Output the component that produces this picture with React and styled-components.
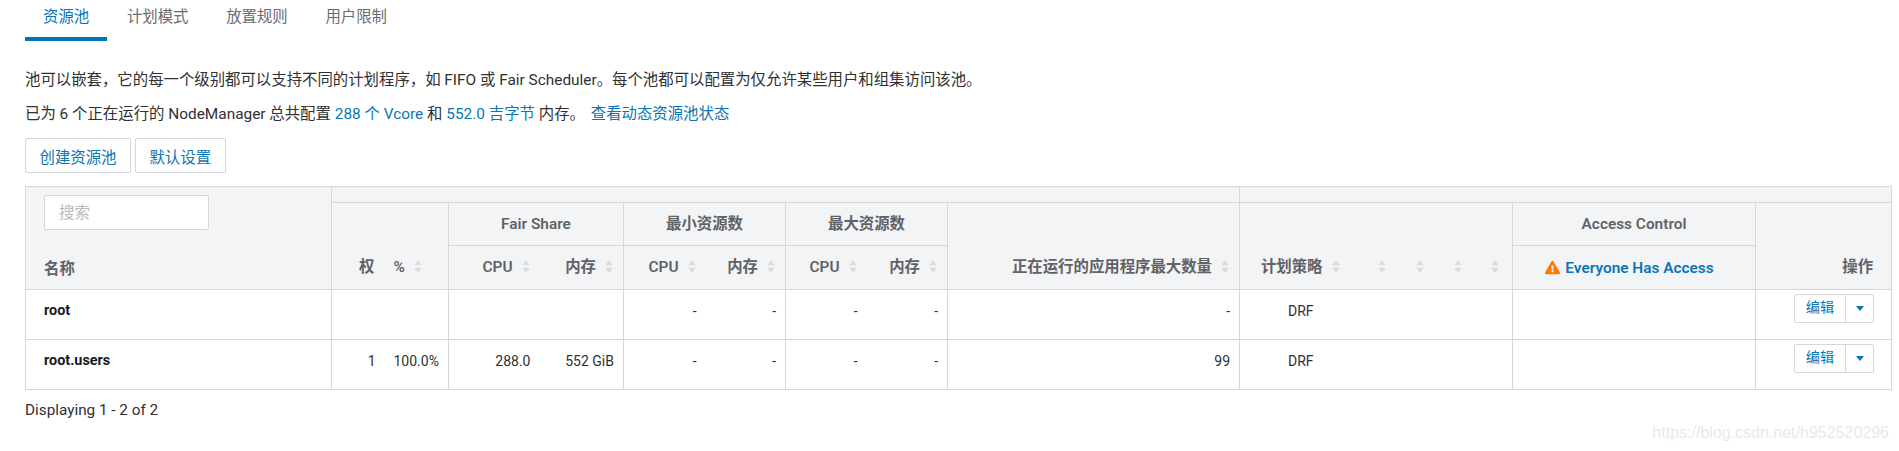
import React from 'react';
import styled, { createGlobalStyle } from 'styled-components';
import { FaExclamationTriangle } from 'react-icons/fa';

const GlobalStyle = createGlobalStyle`
  html, body {
    margin: 0;
    background: #fff;
  }
  body {
    font-family: Roboto, "Noto Sans CJK SC", sans-serif;
    font-size: 15.4px;
    color: #2f3134;
  }
`;

const LINK = '#0a77b5';
const LINE = '#d6d7da';

const columns = [306, 53, 64, 91, 84, 82, 80, 81, 81, 292, 110, 46, 38, 38, 41, 243, 136];

const rows = [
  { name: 'root', weight: '', percent: '', cpu: '', mem: '', values: '-', running: '-' },
  { name: 'root.users', weight: '1', percent: '100.0%', cpu: '288.0', mem: '552 GiB', values: '-', running: '99' },
];

const SortIcon = () => (
  <SortSvg viewBox="0 0 8 13" aria-hidden="true">
    <path d="M4 0 L7.8 5.3 H0.2 Z M4 13 L0.2 7.7 H7.8 Z" fill="#d9dbdf" />
  </SortSvg>
);

const Sortable = ({ children }) => (
  <>
    {children}
    <SortIcon />
  </>
);

const EditButton = () => (
  <SplitButton>
    <EditPart>编辑</EditPart>
    <CaretPart>
      <Caret />
    </CaretPart>
  </SplitButton>
);

export default function App() {
  return (
    <Page>
      <GlobalStyle />
      <Tabs>
        <Tab $active>资源池</Tab>
        <Tab>计划模式</Tab>
        <Tab>放置规则</Tab>
        <Tab>用户限制</Tab>
      </Tabs>

      <Intro>
        <p>池可以嵌套，它的每一个级别都可以支持不同的计划程序，如 FIFO 或 Fair Scheduler。每个池都可以配置为仅允许某些用户和组集访问该池。</p>
        <p>
          已为 6 个正在运行的 NodeManager 总共配置 <Link>288 个 Vcore</Link> 和 <Link>552.0 吉字节</Link> 内存。 <StatusLink>查看动态资源池状态</StatusLink>
        </p>
      </Intro>

      <Actions>
        <ActionButton>创建资源池</ActionButton>
        <ActionButton>默认设置</ActionButton>
      </Actions>

      <PoolTable>
        <colgroup>
          {columns.map((w, i) => (
            <col key={i} style={{ width: w }} />
          ))}
        </colgroup>
        <thead>
          <TopRow>
            <NameHead rowSpan={3}>
              <Search placeholder="搜索" />
              <NameLabel>名称</NameLabel>
            </NameHead>
            <Head colSpan={9} />
            <Head colSpan={7} />
          </TopRow>
          <GroupRow>
            <SortHead rowSpan={2} $noRule>权</SortHead>
            <PercentHead rowSpan={2}><Sortable>%</Sortable></PercentHead>
            <GroupHead colSpan={2}>Fair Share</GroupHead>
            <GroupHead colSpan={2}>最小资源数</GroupHead>
            <GroupHead colSpan={2}>最大资源数</GroupHead>
            <SortHead rowSpan={2}><Sortable>正在运行的应用程序最大数量</Sortable></SortHead>
            <SortHead rowSpan={2} $noRule><Sortable>计划策略</Sortable></SortHead>
            <SortHead rowSpan={2} $noRule><SortIcon /></SortHead>
            <SortHead rowSpan={2} $noRule><SortIcon /></SortHead>
            <SortHead rowSpan={2} $noRule><SortIcon /></SortHead>
            <LastSortHead rowSpan={2}><SortIcon /></LastSortHead>
            <GroupHead>Access Control</GroupHead>
            <ActionHead rowSpan={2}>操作</ActionHead>
          </GroupRow>
          <SubRow>
            <SortHead $noRule><Sortable>CPU</Sortable></SortHead>
            <SortHead><Sortable>内存</Sortable></SortHead>
            <SortHead $noRule><Sortable>CPU</Sortable></SortHead>
            <SortHead><Sortable>内存</Sortable></SortHead>
            <SortHead $noRule><Sortable>CPU</Sortable></SortHead>
            <SortHead><Sortable>内存</Sortable></SortHead>
            <AccessHead>
              <FaExclamationTriangle color="#ff7a00" size={15} />
              <span>Everyone Has Access</span>
            </AccessHead>
          </SubRow>
        </thead>
        <tbody>
          {rows.map((row) => (
            <BodyRow key={row.name}>
              <NameCell>{row.name}</NameCell>
              <NumCell $noRule>{row.weight}</NumCell>
              <PercentCell>{row.percent}</PercentCell>
              <NumCell $noRule>{row.cpu}</NumCell>
              <NumCell>{row.mem}</NumCell>
              <NumCell $noRule>{row.values}</NumCell>
              <NumCell>{row.values}</NumCell>
              <NumCell $noRule>{row.values}</NumCell>
              <NumCell>{row.values}</NumCell>
              <NumCell>{row.running}</NumCell>
              <PolicyCell $noRule>DRF</PolicyCell>
              <Cell $noRule />
              <Cell $noRule />
              <Cell $noRule />
              <Cell />
              <Cell />
              <ActionCell>
                <EditButton />
              </ActionCell>
            </BodyRow>
          ))}
        </tbody>
      </PoolTable>

      <Footer>Displaying 1 - 2 of 2</Footer>
      <Watermark>https://blog.csdn.net/h952520296</Watermark>
    </Page>
  );
}

const Page = styled.div`
  position: relative;
  box-sizing: border-box;
  width: 1899px;
  height: 451px;
  padding-left: 25px;
  overflow: hidden;
`;

const Tabs = styled.div`
  display: flex;
  gap: 1.7px;
`;

const Tab = styled.div`
  padding: 0 18px 4px;
  height: 33px;
  line-height: 35px;
  border-bottom: 4px solid ${(p) => (p.$active ? '#0077b5' : 'transparent')};
  color: ${(p) => (p.$active ? LINK : '#686c71')};
`;

const Intro = styled.div`
  margin-top: 29px;

  p {
    margin: 0 0 14px;
    line-height: 20px;
    white-space: nowrap;
  }
`;

const Link = styled.a`
  color: ${LINK};
`;

const StatusLink = styled(Link)`
  margin-left: 2px;
`;

const Actions = styled.div`
  display: flex;
  gap: 4px;
  margin-top: 14px;
`;

const ActionButton = styled.button`
  box-sizing: border-box;
  height: 35px;
  padding: 0 13.5px;
  background: #fff;
  border: 1px solid ${LINE};
  border-radius: 2px;
  color: ${LINK};
  font: inherit;
`;

const PoolTable = styled.table`
  table-layout: fixed;
  border-collapse: collapse;
  width: 1867px;
  margin-top: 13px;
`;

const TopRow = styled.tr`
  height: 16px;
`;

const GroupRow = styled.tr`
  height: 43px;
`;

const SubRow = styled.tr`
  height: 44px;
`;

const BodyRow = styled.tr`
  height: 50px;
`;

const Head = styled.th`
  padding: 0;
  background: #f3f4f6;
  border-top: 1px solid ${LINE};
  border-bottom: 1px solid ${LINE};
  border-right: ${(p) => (p.$noRule ? 'none' : `1px solid ${LINE}`)};
  color: #5f6368;
  font-weight: 600;
  line-height: 20px;
`;

const NameHead = styled(Head)`
  padding: 7px 18px 10px;
  border-left: 1px solid ${LINE};
  text-align: left;
  vertical-align: bottom;
`;

const Search = styled.input`
  display: block;
  box-sizing: border-box;
  width: 165px;
  height: 35px;
  margin-bottom: 29px;
  padding: 0 14px;
  background: #fff;
  border: 1px solid ${LINE};
  border-radius: 2px;
  font: inherit;
  font-weight: 400;

  &::placeholder {
    color: #b8b9bb;
  }
`;

const NameLabel = styled.div``;

const GroupHead = styled(Head)`
  text-align: center;
`;

const SortHead = styled(Head)`
  padding-right: 10px;
  text-align: right;
  vertical-align: bottom;
  line-height: 43px;
  white-space: nowrap;
`;

const PercentHead = styled(SortHead)`
  padding-left: 9px;
  text-align: left;
`;

const LastSortHead = styled(SortHead)`
  padding-right: 13px;
`;

const ActionHead = styled(SortHead)`
  padding-right: 18px;
`;

const AccessHead = styled(Head)`
  padding-right: 9px;
  color: ${LINK};
  white-space: nowrap;

  svg {
    margin-right: 5px;
    vertical-align: -2px;
  }
`;

const SortSvg = styled.svg`
  display: inline-block;
  width: 8px;
  height: 13px;
  margin-left: 9px;
  vertical-align: -1px;
`;

const Cell = styled.td`
  padding: 0;
  border-bottom: 1px solid ${LINE};
  border-right: ${(p) => (p.$noRule ? 'none' : `1px solid ${LINE}`)};
  font-size: 14px;
  line-height: 20px;
  vertical-align: top;
`;

const NameCell = styled(Cell)`
  padding: 11px 18px 0;
  border-left: 1px solid ${LINE};
  color: #17191c;
  font-weight: 700;
  font-size: 14.4px;
`;

const NumCell = styled(Cell)`
  padding: 11px 9px 0 0;
  text-align: right;
  white-space: nowrap;
`;

const PercentCell = styled(Cell)`
  padding: 11px 0 0 9px;
  white-space: nowrap;
`;

const PolicyCell = styled(Cell)`
  padding: 11px 36px 0 0;
  text-align: right;
`;

const ActionCell = styled(Cell)`
  padding: 4px 17px 0 0;
`;

const SplitButton = styled.div`
  display: flex;
  justify-content: flex-end;
`;

const EditPart = styled.button`
  box-sizing: border-box;
  width: 52px;
  height: 29px;
  padding: 0 0 4px;
  background: #fff;
  border: 1px solid ${LINE};
  border-radius: 2px 0 0 2px;
  color: ${LINK};
  font: inherit;
  font-size: 14.2px;
`;

const CaretPart = styled.button`
  display: flex;
  align-items: center;
  justify-content: center;
  box-sizing: border-box;
  width: 29px;
  height: 29px;
  margin-left: -1px;
  padding: 0;
  background: #fff;
  border: 1px solid ${LINE};
  border-radius: 0 2px 2px 0;
`;

const Caret = styled.span`
  width: 0;
  height: 0;
  border-left: 4.5px solid transparent;
  border-right: 4.5px solid transparent;
  border-top: 5px solid ${LINK};
`;

const Footer = styled.div`
  margin-top: 10px;
  font-size: 15.3px;
  line-height: 20px;
`;

const Watermark = styled.div`
  position: absolute;
  right: 10px;
  bottom: 8px;
  color: #e9e9e9;
  font-family: "Liberation Sans", sans-serif;
  font-size: 16px;
  line-height: 20px;
`;
